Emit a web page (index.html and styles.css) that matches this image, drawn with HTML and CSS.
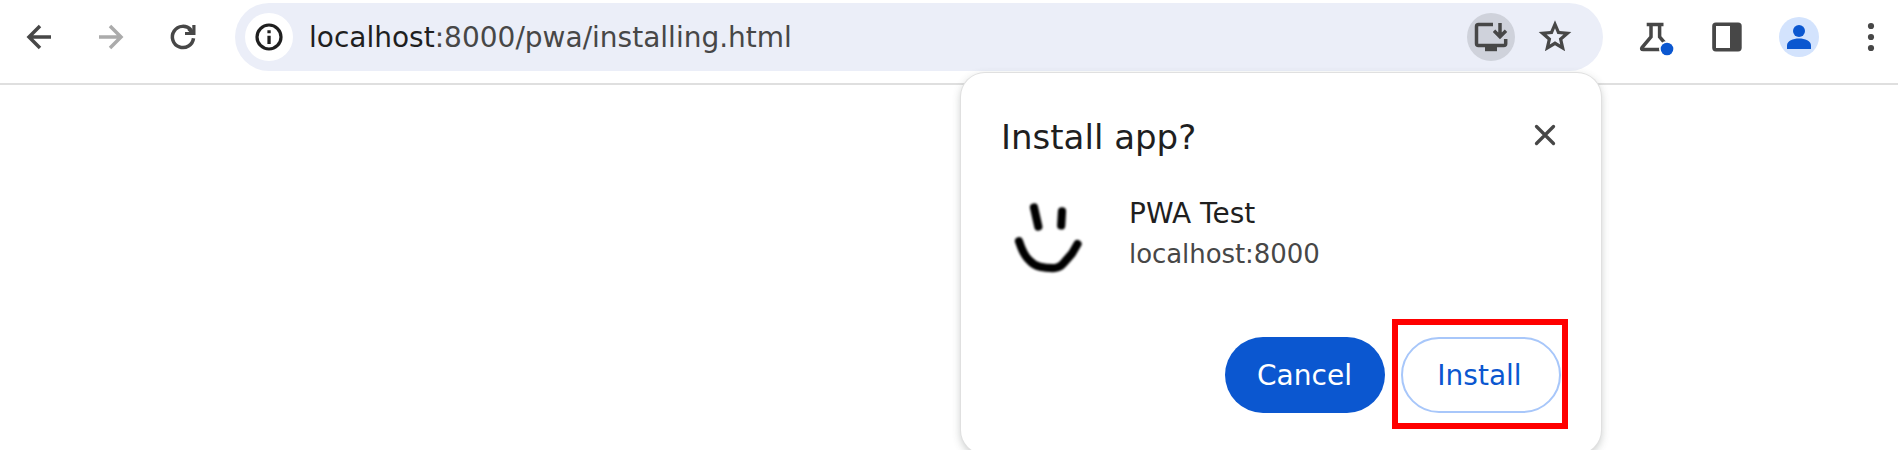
FILE: index.html
```html
<!DOCTYPE html>
<html lang="en">
<head>
<meta charset="utf-8">
<title>PWA Test</title>
<link rel="stylesheet" href="styles.css">
</head>
<body>
<header class="toolbar">
  <nav class="tools">
    <svg class="icon line" viewBox="0 0 48 48"><path d="M36 24H14.5M25 13 14 24l11 11"/></svg>
    <svg class="icon line disabled" viewBox="0 0 48 48"><path d="M12 24h21.500M23 13l11 11-11 11"/></svg>
    <svg class="icon line" viewBox="0 0 48 48"><path d="M34.500 25.200A10.600 10.600 0 1 1 31.800 16.800"/><path class="solid" d="M33.300 12h3.200v10H26v-3h4.300l-1.800-2 2.500-2.600 2.300 2.200z"/></svg>
  </nav>
  <div class="omnibox">
    <span class="chip info"><svg class="icon" viewBox="0 0 48 48"><circle class="ring" cx="24" cy="24" r="12"/><path class="mark" d="M22.400 22.800h3.300v8.200h-3.300zM22.400 17.200h3.300v3h-3.300z"/></svg></span>
    <span class="url"><span class="host">localhost</span>:8000/pwa/installing.html</span>
    <span class="chip active"><svg class="icon line" viewBox="0 0 48 48"><path d="M26 11.600H11.500a2 2 0 0 0-2 2V30.500a2 2 0 0 0 2 2H36.700a2 2 0 0 0 2-2V26M33 10v12.500M27 17.800l6 5.900 6-5.900"/><path class="solid" d="M18 33h12v5.200H18z"/></svg></span>
    <svg class="icon" viewBox="0 0 48 48"><g transform="translate(4.400 4) scale(1.633)"><path class="solid" d="M22 9.240l-7.190-.62L12 2 9.190 8.630 2 9.240l5.460 4.730L5.820 21 12 17.270 18.180 21l-1.630-7.030z"/><path class="star-core" transform="translate(1.800 1.780) scale(.85)" d="M12 15.400l-3.760 2.270 1-4.280-3.320-2.880 4.380-.38L12 6.100l1.710 4.040 4.380.38-3.320 2.880 1 4.280z"/></g></svg>
  </div>
  <div class="tools">
    <svg class="icon line" viewBox="0 0 48 48"><path d="M15.700 11.400h16.800M20 11.400V23.800L11.200 34.300q-1.600 2.300 1 2.300H34M28.600 11.400V23.800L36 32.500"/><circle class="halo" cx="36" cy="36" r="8"/><circle class="accent" cx="36" cy="36" r="6.300"/></svg>
    <svg class="icon" viewBox="0 0 48 48"><rect class="solid" x="9.200" y="9.400" width="29.500" height="29" rx="3.600"/><path class="halo" d="M13 13h14v22H13z"/></svg>
    <svg class="icon" viewBox="0 0 48 48"><circle class="avatar" cx="24" cy="24" r="20"/><circle class="accent" cx="24" cy="18" r="6"/><path class="accent" d="M12 36v-3.700c0-4.400 6-6.900 12-6.900s12 2.500 12 6.900V36z"/></svg>
    <svg class="icon" viewBox="0 0 48 48"><circle class="solid" cx="24" cy="13" r="3.100"/><circle class="solid" cx="24" cy="24" r="3.100"/><circle class="solid" cx="24" cy="35" r="3.100"/></svg>
  </div>
</header>
<section class="dialog">
  <div class="dialog-head">
    <h1 class="title">Install app?</h1>
    <svg class="icon close" viewBox="0 0 48 48"><path d="m15.500 15.500 17 17m0-17-17 17"/></svg>
  </div>
  <div class="app">
    <svg class="face" viewBox="0 0 96 96"><path d="M33 16.500l4.300 19M61 20.300l-.8 14.200M18 50.200C20.500 58 24 65.500 28.500 69.500Q33 74.500 39 75.700 46 77.300 54 77C59 76.500 61 74 64 70.500L71 62.500 76.500 53"/></svg>
    <div class="details">
      <div class="name">PWA Test</div>
      <div class="origin">localhost:8000</div>
    </div>
  </div>
  <div class="actions">
    <button class="button primary">Cancel</button>
    <div class="highlight"><button class="button outlined">Install</button></div>
  </div>
</section>
</body>
</html>
```
FILE: styles.css
```css
* { box-sizing: border-box; }
html, body { height: 100%; }
body {
  margin: 0;
  overflow: hidden;
  position: relative;
  background: #fff;
  color: #1f1f1f;
  font: 28px/36px "DejaVu Sans", sans-serif;
}
.toolbar {
  display: flex;
  align-items: center;
  gap: 28px;
  height: 85px;
  padding: 3px 3px 12px 15px;
  border-bottom: 2px solid #dfdfdf;
}
.tools { display: flex; gap: 24px; flex: none; }
.icon { display: block; width: 48px; height: 48px; flex: none; }
.solid { fill: #474747; stroke: none; }
.line { fill: none; stroke: #474747; stroke-width: 3.5; }
.disabled { stroke: #ababab; }
.halo { fill: #fff; stroke: none; }
.star-core { fill: #ebeef8; }
.accent { fill: #0b57d0; stroke: none; }
.avatar { fill: #d3e3fd; }
.omnibox {
  flex: 1;
  display: flex;
  align-items: center;
  gap: 16px;
  height: 68px;
  padding: 0 24px 0 10px;
  border-radius: 34px;
  background: #ebeef8;
}
.chip { flex: none; border-radius: 50%; }
.info { background: #fff; }
.active { background: #cfd2db; }
.ring { fill: none; stroke: #1f1f1f; stroke-width: 3.2; }
.mark { fill: #1f1f1f; }
.url { flex: 1; padding-top: 2px; color: #474747; white-space: nowrap; }
.host { color: #1f1f1f; }
.dialog {
  position: absolute;
  left: 961px;
  top: 73px;
  width: 640px;
  height: 381px;
  padding: 38px 32px 25px 40px;
  border-radius: 24px;
  background: #fff;
  box-shadow: 0 0 0 1px #e0e0e0, 0 3px 8px rgba(60, 70, 65, .3);
}
.dialog-head { display: flex; justify-content: space-between; align-items: center; height: 48px; }
.title { margin: 0; padding-top: 4px; font-size: 34px; font-weight: 400; line-height: 48px; }
.close { fill: none; stroke: #474747; stroke-width: 3.3; stroke-linecap: round; }
.app { display: flex; gap: 32px; margin-top: 32px; }
.face { width: 96px; height: 96px; overflow: visible; filter: blur(1px); fill: none; stroke: #000; stroke-width: 8.2; stroke-linecap: round; stroke-linejoin: round; }
.details { padding-top: 5px; }
.origin { font-size: 26px; line-height: 36px; margin-top: 4px; letter-spacing: -.07px; color: #474747; }
.actions { display: flex; align-items: flex-start; justify-content: flex-end; gap: 7px; margin: 32px 1px 0 0; }
.highlight { display: flex; padding: 12px 1px 10px 3px; border: 6px solid #f00; }
.button { width: 160px; height: 76px; padding: 1px 1px 0 0; border-radius: 38px; font: inherit; }
.primary { margin-top: 18px; border: 0; background: #0b57d0; color: #fff; }
.outlined { padding: 1px 3px 0 0; border: 2px solid #a8c7fa; background: #fff; color: #0b57d0; }
```
